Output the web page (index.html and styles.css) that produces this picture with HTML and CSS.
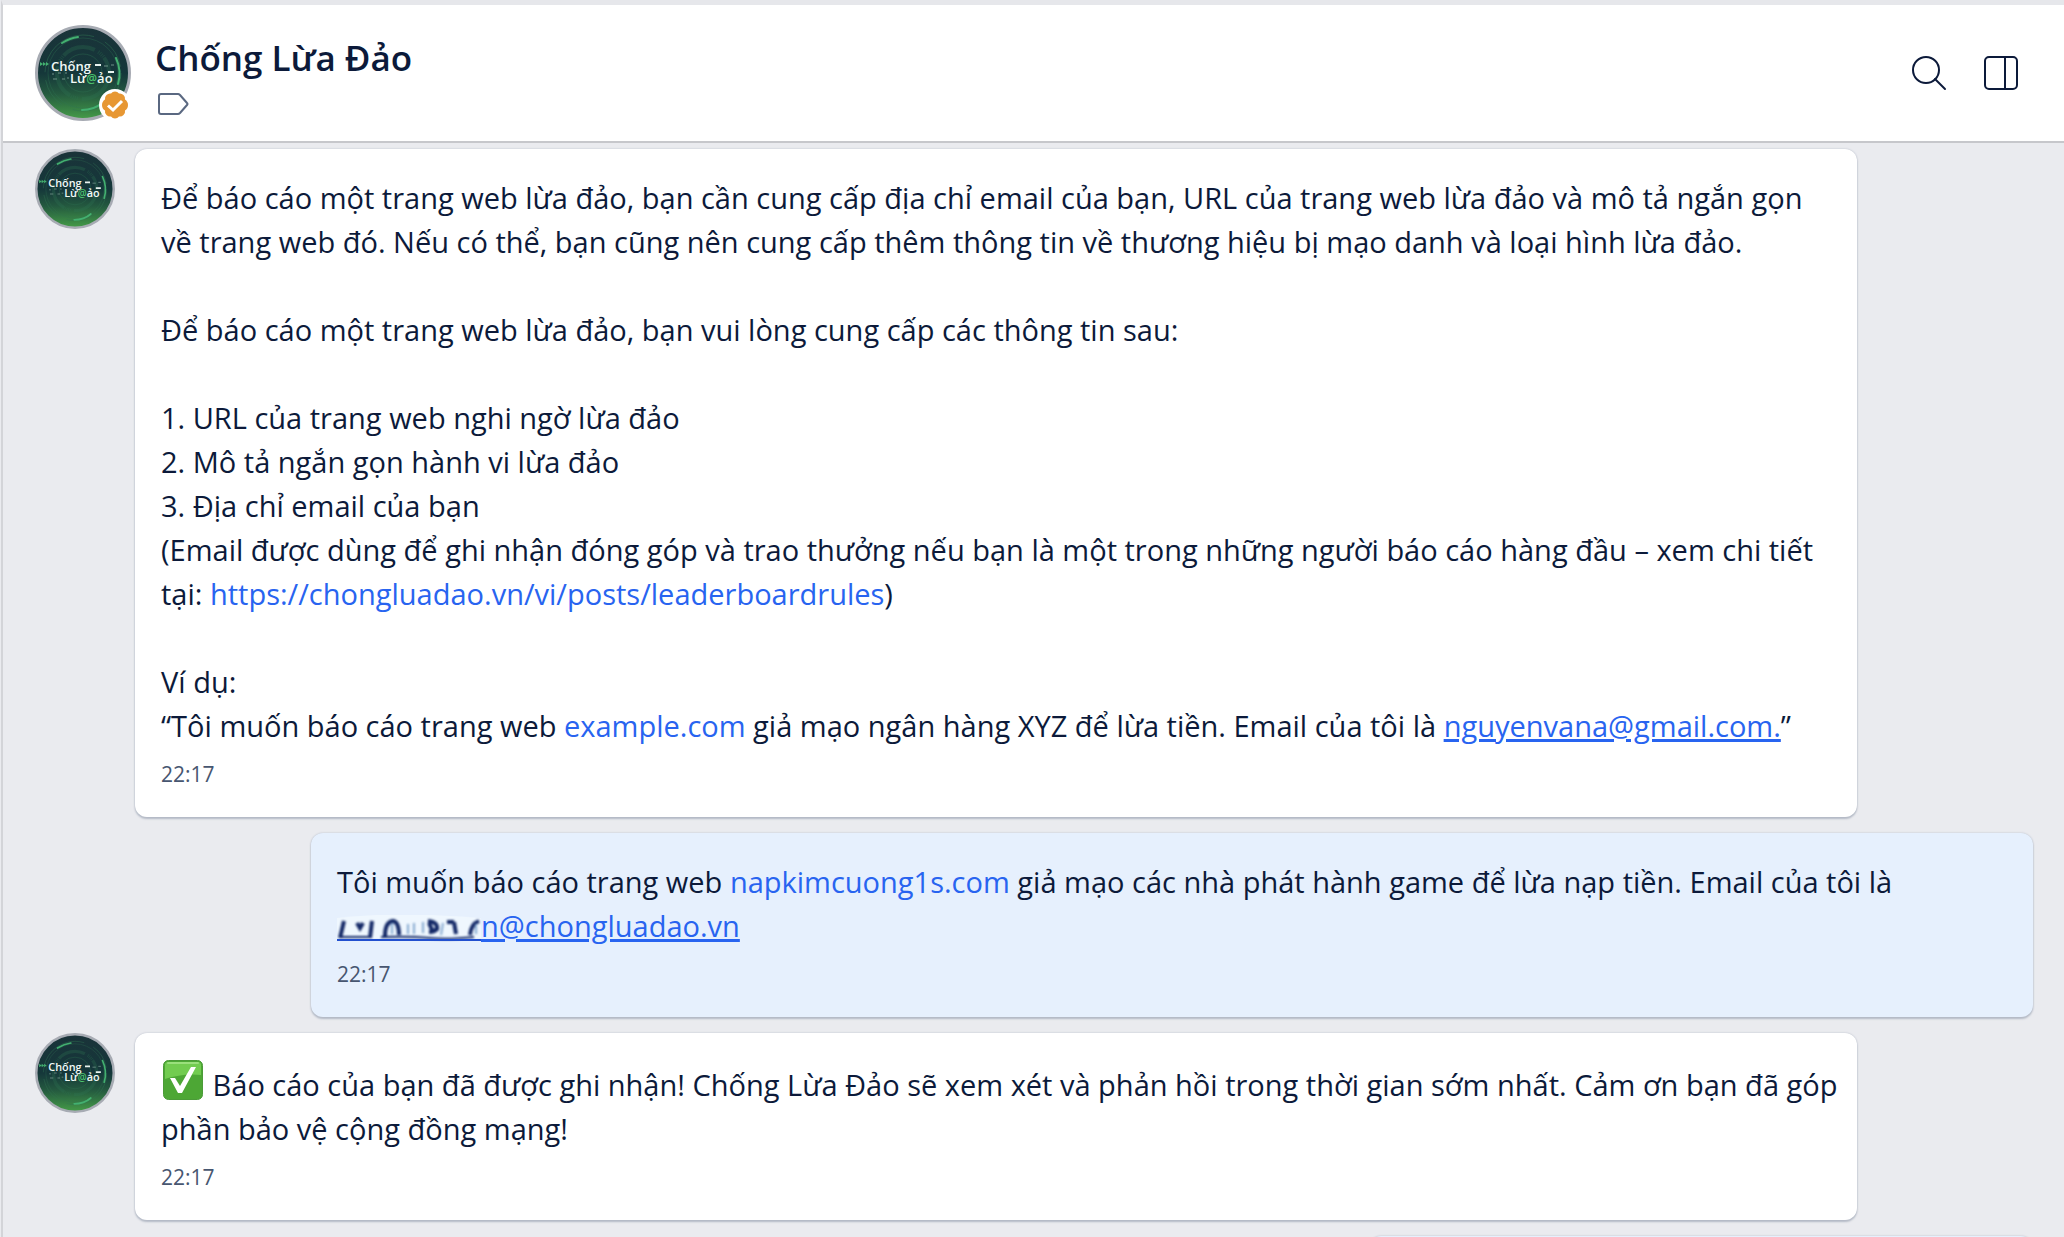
FILE: index.html
```
<!DOCTYPE html>
<html lang="vi">
<head>
    <meta charset="UTF-8">
    <meta name="viewport" content="width=device-width, initial-scale=1.0">
    <title>Chống Lừa Đảo</title>
    <link rel="stylesheet" href="styles.css">
</head>
<body>
    <!-- Logo dùng chung cho các ảnh đại diện -->
    <svg class="sprite" aria-hidden="true">
        <defs>
            <linearGradient id="logoBg" x1="0" y1="0" x2="0" y2="1">
                <stop offset="0" stop-color="#1a3339"/>
                <stop offset="0.5" stop-color="#15373a"/>
                <stop offset="0.72" stop-color="#24593f"/>
                <stop offset="1" stop-color="#459c48"/>
            </linearGradient>
        </defs>
        <symbol id="logo" viewBox="0 0 96 96">
            <circle cx="48" cy="48" r="46.5" fill="url(#logoBg)" stroke="#a7abb3" stroke-width="3"/>
            <g fill="none" stroke="#2f7352">
                <circle cx="48" cy="48" r="38" stroke-opacity="0.5" stroke-dasharray="70 12 30 8"/>
                <circle cx="48" cy="48" r="35" stroke-opacity="0.35"/>
                <circle cx="48" cy="48" r="26" stroke-width="4" stroke-opacity="0.3" stroke-dasharray="1 1 1 1 1 1 1 1 34 4"/>
                <circle cx="48" cy="48" r="19" stroke-opacity="0.4"/>
                <path d="M27 18q8-5 16-6M81 33q6 13 2 26M47 85q12 0 20-7" stroke="#43b070" stroke-width="2" stroke-linecap="round"/>
            </g>
            <path d="M5 37l3 2-3 2zm3 0l3 2-3 2zm3 0l3 2-3 2z" fill="#43b070"/>
            <path d="M60 40h6M73 47h6" stroke="#e8f2ee" stroke-width="2"/>
            <path d="M69 41h4m3-1h3M17 49h2m4-1h3m4 0h2M18 54h4m5 0h3m2-1h2" stroke="#6f9288"/>
            <text x="16" y="46" class="logo-text">Chống</text>
            <text x="35" y="58" class="logo-text">Lừ<tspan class="logo-at" fill="#4cc26d">@</tspan>ảo</text>
        </symbol>
    </svg>

    <div class="chat">
        <header class="chat-header">
            <div class="profile-photo">
                <svg class="avatar avatar-large" role="img" aria-label="Chống Lừa Đảo"><use href="#logo"/></svg>
                <svg class="verified" viewBox="0 0 32 32" aria-hidden="true">
                    <circle cx="16" cy="16" r="16" fill="#fff"/>
                    <path d="M16 2.500q2.500 0 4 2 2.500-.5 4.500 1.500 2 2 1.500 4.500 3 2 3 5.500t-3 5.500q.5 2.500-1.500 4.500t-4.500 1.500q-1.500 2-4 2t-4-2q-2.500.5-4.500-1.500t-1.500-4.500q-3-2-3-5.500t3-5.500q-.5-2.500 1.500-4.500t4.500-1.500q1.500-2 4-2z" fill="#e79733"/>
                    <path d="M9 16.500l5 4.500 9-9" fill="none" stroke="#fff" stroke-width="3"/>
                </svg>
            </div>
            <div class="contact">
                <h1>Chống Lừa Đảo</h1>
                <button class="tag-button" aria-label="Phân loại">
                    <svg width="32" height="24" viewBox="0 0 32 24" fill="none" stroke="#5a6881" stroke-width="2" stroke-linejoin="round" aria-hidden="true">
                        <path d="M4 2h17q1 0 2 1l7 8q1 1 0 2l-7 8q-1 1-2 1H4q-2 0-2-2V4q0-2 2-2z"/>
                    </svg>
                </button>
            </div>
            <div class="actions">
                <button aria-label="Tìm kiếm">
                    <svg width="36" height="36" viewBox="0 0 36 36" fill="none" stroke="#0c1a3a" stroke-width="2" stroke-linecap="round" aria-hidden="true">
                        <circle cx="15" cy="15" r="13"/>
                        <path d="M24 24l10 10"/>
                    </svg>
                </button>
                <button aria-label="Thông tin hội thoại">
                    <svg width="36" height="36" viewBox="0 0 36 36" fill="none" stroke="#0c1a3a" stroke-width="2" aria-hidden="true">
                        <rect x="2" y="2" width="32" height="32" rx="4"/>
                        <path d="M22 2v32"/>
                    </svg>
                </button>
            </div>
        </header>

        <main class="messages">
            <article class="message">
                <svg class="avatar" aria-hidden="true"><use href="#logo"/></svg>
                <div class="bubble">
                    <p>Để báo cáo một trang web lừa đảo, bạn cần cung cấp địa chỉ email của bạn, URL của trang web lừa đảo và mô tả ngắn gọn về&nbsp;trang web đó. Nếu có thể, bạn cũng nên cung cấp thêm thông tin về thương hiệu bị mạo danh và loại hình lừa đảo.<br>
                        <br>
                        Để báo cáo một trang web lừa đảo, bạn vui lòng cung cấp các thông tin sau:<br>
                        <br>
                        1. URL của trang web nghi ngờ lừa đảo<br>
                        2. Mô tả ngắn gọn hành vi lừa đảo<br>
                        3. Địa chỉ email của bạn<br>
                        (Email được dùng để ghi nhận đóng góp và trao thưởng nếu bạn là một trong những người báo cáo hàng đầu – xem chi tiết tại: <a href="https://chongluadao.vn/vi/posts/leaderboardrules">https://chongluadao.vn/vi/posts/leaderboardrules</a>)<br>
                        <br>
                        Ví dụ:<br>
                        “Tôi muốn báo cáo trang web <a href="https://example.com">example.com</a> giả mạo ngân hàng XYZ để lừa tiền. Email của tôi là <a class="email" href="mailto:nguyenvana@gmail.com">nguyenvana@gmail.com.</a>”</p>
                    <time>22:17</time>
                </div>
            </article>

            <article class="message sent">
                <div class="bubble">
                    <p>Tôi muốn báo cáo trang web <a href="https://napkimcuong1s.com">napkimcuong1s.com</a> giả mạo các nhà phát hành game để lừa nạp tiền. Email của tôi là <a class="email" href="#"><svg class="hidden-name" viewBox="0 0 144 28" aria-hidden="true">
                        <!-- Phần tên bị tẩy mờ -->
                        <path d="M0 3Q60-4 144 3v20H0z" fill="#eff7fe"/>
                        <g class="smudge" fill="none" stroke="#122766" stroke-width="4">
                            <path d="M7 6L3 23M35 6l-2 17M48 21q0-14 8-15 6 1 6 14M117 7l2 12M133 20q1-11 9-14"/>
                            <path d="M20 8l3 5 3-5M91 6q10 1 9 8-3 3-8 3M110 7h7M92 8l4 9"/>
                            <path d="M55 8v11M71 9v10M77 8v11M86 7v11M104 20l2-12M139 9v10" stroke="#86a9d0" stroke-width="2"/>
                            <path d="M2 22h33M44 22q30-1 48 1t45-1" stroke-width="2"/>
                        </g>
                        <path d="M0 24h144v2H0z" fill="#2250cf"/>
                    </svg>n@chongluadao.vn</a></p>
                    <time>22:17</time>
                </div>
            </article>

            <article class="message">
                <svg class="avatar" aria-hidden="true"><use href="#logo"/></svg>
                <div class="bubble">
                    <p><svg class="emoji" viewBox="0 0 40 40" role="img" aria-label="Đã xong">
                        <rect x="0.500" y="0.500" width="39" height="39" rx="5" fill="#4da735" stroke="#4b9b38"/>
                        <path d="M2 5q0-3 3-3h30q3 0 3 3v10q-18-2-36 4z" fill="#72cc50"/>
                        <path d="M5 3h30" stroke="#9ae07c" stroke-width="2" stroke-linecap="round"/>
                        <path d="M7 18l5 0 5 8L28 7h5L19 33h-4z" fill="#fff"/>
                    </svg> Báo cáo của bạn đã được ghi nhận! Chống Lừa Đảo sẽ xem xét và phản hồi trong thời gian sớm nhất. Cảm ơn bạn đã góp phần bảo vệ cộng đồng mạng!</p>
                    <time>22:17</time>
                </div>
            </article>

            <!-- Tin nhắn kế tiếp, nằm dưới mép cửa sổ -->
            <article class="message sent">
                <div class="bubble bubble-short"></div>
            </article>
        </main>
    </div>
</body>
</html>
```
FILE: styles.css
```
* {
    box-sizing: border-box;
}

body {
    margin: 0;
    font-family: "Open Sans", "Noto Sans", sans-serif;
    font-size: 29px;
    line-height: 44px;
    color: #0c1a3a;
    background-color: #eaebef;
}

button {
    display: flex;
    padding: 0;
    border: none;
    background: none;
    cursor: pointer;
}

.sprite {
    position: absolute;
    width: 0;
    height: 0;
}

.chat {
    display: flex;
    flex-direction: column;
    height: 100vh;
    margin-left: 1px;
    border-top: 5px solid #e6e7eb;
    border-left: 2px solid #d3d4d8;
}

/* Thanh tiêu đề */
.chat-header {
    display: flex;
    flex: none;
    align-items: center;
    gap: 24px;
    height: 138px;
    padding: 0 45px 0 32px;
    background-color: #fff;
    border-bottom: 2px solid #c6c7cb;
}

.profile-photo {
    position: relative;
    display: flex;
}

.avatar {
    flex: none;
    width: 80px;
    height: 80px;
}

.avatar-large {
    width: 96px;
    height: 96px;
}

.logo-text {
    font-size: 13px;
    font-weight: 600;
    fill: #f2faf7;
}

.logo-at {
    font-size: 12px;
    fill: #4cc26d;
}

.verified {
    position: absolute;
    right: 0;
    bottom: 0;
    width: 32px;
    height: 32px;
}

.contact {
    flex: 1;
    padding-top: 6px;
}

.contact h1 {
    margin: 0 0 12px;
    font-size: 35px;
    line-height: 44px;
    font-weight: 600;
}

.tag-button {
    margin-left: 2px;
}

.actions {
    display: flex;
    gap: 36px;
}

/* Danh sách tin nhắn */
.messages {
    display: flex;
    flex: 1;
    flex-direction: column;
    gap: 16px;
    min-height: 0;
    padding: 6px 31px 0 32px;
    overflow-y: auto;
    scrollbar-width: none;
}

.message {
    display: flex;
    flex: none;
    align-items: flex-start;
    gap: 20px;
    padding-right: 176px;
}

.message.sent {
    justify-content: flex-end;
    padding-right: 0;
    padding-left: 276px;
}

.bubble {
    flex: 1;
    padding: 27px 16px 27px 26px;
    border-radius: 12px;
    background-color: #fff;
    box-shadow: 0 0 2px #b4bac6, 0 2px 2px #b4bac6;
}

.sent .bubble {
    background-color: #e6f0fd;
}

.bubble-short {
    flex: 0 1 664px;
}

.bubble p {
    margin: 0 0 10px;
}

.bubble a {
    color: #2864f0;
    text-decoration: none;
}

.bubble .email {
    text-decoration: underline;
    text-decoration-thickness: 3px;
}

.bubble time {
    display: block;
    font-size: 21px;
    line-height: 32px;
    color: #475670;
}

.hidden-name {
    width: 144px;
    height: 28px;
    vertical-align: -6px;
}

.smudge {
    filter: blur(1px);
}

.emoji {
    width: 44px;
    height: 40px;
    padding: 0 2px;
    vertical-align: -4px;
}
```
